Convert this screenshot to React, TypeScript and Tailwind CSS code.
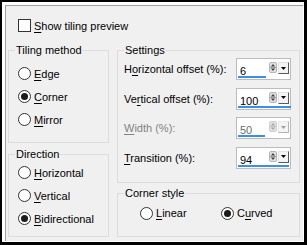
import React from "react";

const font = { fontFamily: '"Liberation Sans", Arial, sans-serif' };

function U({ c }: { c: string }) {
  return <span className="underline underline-offset-[2px] decoration-[1px]">{c}</span>;
}

function Radio({ checked }: { checked?: boolean }) {
  return (
    <span className="flex w-[13px] h-[13px] shrink-0 items-center justify-center rounded-full border border-[#333333] bg-white">
      {checked && <span className="block w-[7px] h-[7px] rounded-full bg-[#1b1b1b]" />}
    </span>
  );
}

function RadioRow({ checked, pre, u, post, h = "h-[23px]" }: { checked?: boolean; pre?: string; u: string; post: string; h?: string }) {
  return (
    <div className={`flex items-center ${h}`}>
      <Radio checked={checked} />
      <span className="ml-[3px] text-[11px] leading-[14px] text-black">
        {pre}
        <U c={u} />
        {post}
      </span>
    </div>
  );
}

function Spinner({ disabled }: { disabled?: boolean }) {
  const a = disabled ? "#a8a8a8" : "#444444";
  return (
    <svg width="8" height="11" viewBox="0 0 8 11" className="shrink-0">
      <rect x="0.5" y="0.5" width="7" height="10" rx="1.5" fill="#e2e2e2" stroke={disabled ? "#cfcfcf" : "#b4b4b4"} />
      <path d="M4 2 L6.2 4.6 H1.8 Z" fill={a} />
      <line x1="1" y1="5.5" x2="7" y2="5.5" stroke={disabled ? "#c4c4c4" : "#9a9a9a"} />
      <path d="M1.8 6.4 H6.2 L4 9 Z" fill={a} />
    </svg>
  );
}

function Drop({ disabled }: { disabled?: boolean }) {
  return (
    <div
      className={`flex h-[12px] w-[11px] shrink-0 items-center justify-center border-l border-t border-r border-b ${
        disabled ? "border-l-[#e8e8e8] border-t-[#e8e8e8] border-r-[#b5b5b5] border-b-[#b5b5b5]" : "border-l-[#e3e3e3] border-t-[#e3e3e3] border-r-[#5a5a5a] border-b-[#5a5a5a]"
      } bg-[#f4f4f4]`}
    >
      <svg width="7" height="5" viewBox="0 0 7 5">
        <path d="M1 1 H6 L3.5 4 Z" fill={disabled ? "#a0a0a0" : "#000"} />
      </svg>
    </div>
  );
}

function SpinBox({ value, pct, disabled }: { value: string; pct: number; disabled?: boolean }) {
  return (
    <div className="relative h-[22px] w-[55px] shrink-0 border border-[#b9bcc2] bg-white">
      <div className="flex h-full items-start pt-[3px] pr-[1px]">
        <span className={`ml-[3px] flex-1 pt-[2px] text-[11px] leading-[14px] ${disabled ? "text-[#6d6d6d]" : "text-black"}`}>{value}</span>
        <Spinner disabled={disabled} />
        <div className="ml-[1px]">
          <Drop disabled={disabled} />
        </div>
      </div>
      <div className="absolute bottom-[1px] left-[1px] h-[2px] bg-[#3b8fe6]" style={{ width: `${(pct * 53) / 100}px` }} />
    </div>
  );
}

function Row({ children, input, disabled }: { children: React.ReactNode; input: React.ReactNode; disabled?: boolean }) {
  return (
    <div className="flex h-[24px] items-center justify-between">
      <span className={`text-[11px] leading-[14px] ${disabled ? "text-[#838383]" : "text-black"}`}>{children}</span>
      {input}
    </div>
  );
}

function Legend({ children }: { children: React.ReactNode }) {
  return <legend className="ml-[6px] px-[1px] text-[11px] leading-[14px] text-black">{children}</legend>;
}

export default function App() {
  return (
    <div style={font} className="h-[245px] w-[307px] bg-black pl-[2px] pt-[2px] pr-[3px] pb-[3px]">
      <div className="h-full bg-white pl-[3px] pt-[3px] pr-[1px] pb-[1px]">
        <div className="h-full border-l border-t border-[#a0a0a0] bg-[#f0f0f0]">
          <div className="ml-[12px] mt-[13px] flex h-[13px] items-center">
            <span className="block h-[13px] w-[13px] border border-[#333333] bg-white" />
            <span className="ml-[3px] text-[11px] leading-[14px] text-black">
              <U c="S" />how tiling preview
            </span>
          </div>
          <div className="mt-[11px] flex gap-[8px] pl-[2px]">
            <div className="flex w-[101px] flex-col">
              <fieldset className="m-0 h-[100px] border border-solid border-[#dcdcdc] p-0">
                <Legend>Tiling method</Legend>
                <div className="pl-[9px] pt-[5px]">
                  <RadioRow u="E" post="dge" />
                  <RadioRow checked u="C" post="orner" />
                  <RadioRow u="M" post="irror" />
                </div>
              </fieldset>
              <fieldset className="m-0 mt-[4px] h-[90px] border border-solid border-[#dcdcdc] p-0">
                <Legend>Direction</Legend>
                <div className="pl-[9px]">
                  <RadioRow u="H" post="orizontal" />
                  <RadioRow u="V" post="ertical" />
                  <RadioRow checked u="B" post="idirectional" />
                </div>
              </fieldset>
            </div>
            <div className="flex w-[183px] flex-col">
              <fieldset className="m-0 h-[140px] border border-solid border-[#dcdcdc] p-0">
                <Legend>Settings</Legend>
                <div className="flex flex-col gap-[5.5px] pl-[6px] pr-[8px]">
                  <Row input={<SpinBox value="6" pct={53} />}>
                    H<U c="o" />rizontal offset (%):
                  </Row>
                  <Row input={<SpinBox value="100" pct={100} />}>
                    Ve<U c="r" />tical offset (%):
                  </Row>
                  <Row disabled input={<SpinBox value="50" pct={50} disabled />}>
                    <U c="W" />idth (%):
                  </Row>
                  <Row input={<SpinBox value="94" pct={97} />}>
                    <U c="T" />ransition (%):
                  </Row>
                </div>
              </fieldset>
              <fieldset className="m-0 mt-[3px] h-[51px] border border-solid border-[#dcdcdc] p-0">
                <Legend>Corner style</Legend>
                <div className="flex pl-[22px] pt-[1px]">
                  <div className="w-[81px]">
                    <RadioRow u="L" post="inear" h="h-[24px]" />
                  </div>
                  <RadioRow checked pre="C" u="u" post="rved" h="h-[24px]" />
                </div>
              </fieldset>
            </div>
          </div>
        </div>
      </div>
    </div>
  );
}
